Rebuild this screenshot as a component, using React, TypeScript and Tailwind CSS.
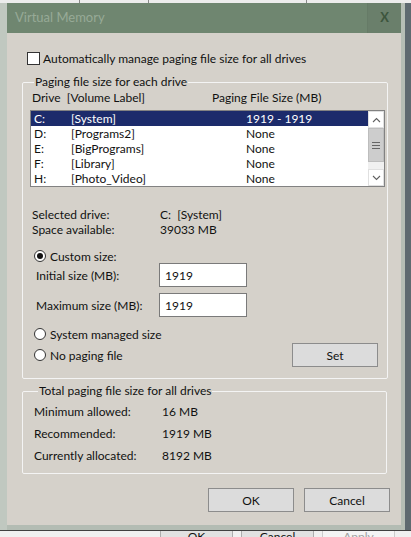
import React from 'react';

const font = "font-['Lato','Liberation_Sans',sans-serif]";

const Radio = ({ checked, label }: { checked?: boolean; label: string }) => (
  <div className="flex items-center h-[14px]">
    <div className="w-[12px] h-[12px] rounded-full border border-[#333] bg-white flex items-center justify-center">
      {checked && <div className="w-[6px] h-[6px] rounded-full bg-[#111]" />}
    </div>
    <span className="ml-[4px]">{label}</span>
  </div>
);

const Button = ({ label, className = '' }: { label: string; className?: string }) => (
  <div className={`w-[86px] h-[24px] bg-[#dcdcdc] border border-[#8c8c8c] flex items-center justify-center ${className}`}>
    {label}
  </div>
);

const drives = [
  { d: 'C:', label: '[System]', size: '1919 - 1919', selected: true },
  { d: 'D:', label: '[Programs2]', size: 'None' },
  { d: 'E:', label: '[BigPrograms]', size: 'None' },
  { d: 'F:', label: '[Library]', size: 'None' },
  { d: 'H:', label: '[Photo_Video]', size: 'None' },
];

const Chevron = ({ up }: { up?: boolean }) => (
  <svg width="9" height="6" viewBox="0 0 9 6">
    <path d={up ? 'M1 5 L4.5 1.5 L8 5' : 'M1 1 L4.5 4.5 L8 1'} fill="none" stroke="#606060" strokeWidth="1.1" />
  </svg>
);

export default function App() {
  return (
    <div className={`w-[411px] h-[537px] overflow-hidden bg-[#bcc5bc] flex flex-col text-[12px] text-[#111] ${font}`}>
      {/* background window tabs, mostly hidden behind the dialog */}
      <div className="h-[3px] overflow-hidden bg-[#ececec] flex text-[12px] leading-[14px] text-[#222] shrink-0">
        <div className="-mt-[11px] flex">
          <span className="pl-[2px] pr-[6px] border-r border-[#888]">Visual Effects</span>
          <span className="px-[8px] border-r border-[#888]">Advanced</span>
          <span className="px-[8px] border-r border-[#888]">Data Execution Prevention</span>
        </div>
      </div>

      <div className="flex flex-1">
        <div className="w-[7px] bg-[#c0c8c0]" />
        <div className="w-[394px] flex flex-col">
          {/* title bar */}
          <div className="h-[30px] bg-[#6f8670] flex">
            <div className="flex-1 pl-[8px] flex items-center text-[13px] text-[#97aa97]">Virtual Memory</div>
            <div className="w-[34px] bg-[#6a7f6b] border-l border-[#667b67] flex items-center justify-center text-[13px] font-bold text-[#3d553d]">
              X
            </div>
          </div>

          {/* body */}
          <div className="h-[492px] bg-[#d5d1ca] pt-[18px] px-[15px] flex flex-col leading-[15px]">
            <div className="flex items-center h-[15px] pl-[5px]">
              <div className="w-[13px] h-[13px] bg-white border border-[#333]" />
              <span className="ml-[3px]">Automatically manage paging file size for all drives</span>
            </div>

            <fieldset className="mt-[9px] w-[365px] border border-[#f4f4f4] rounded-[2px] pl-[7px] pr-[2px] pb-[11px]">
              <legend className="ml-[4px] px-[1px] leading-[14px]">Paging file size for each drive</legend>
              <div className="flex h-[15px] mt-[1px] pl-[2px]">
                <span className="w-[180px]">Drive&nbsp;&nbsp;[Volume Label]</span>
                <span>Paging File Size (MB)</span>
              </div>
              <div className="mt-[5px] w-[355px] h-[77px] bg-white border border-[#828282] flex">
                <div className="flex-1 flex flex-col">
                  {drives.map((r) => (
                    <div
                      key={r.d}
                      className={`h-[15px] flex items-center ${r.selected ? 'bg-[#1c2b6b] text-white' : ''}`}
                    >
                      <span className="w-[40px] pl-[3px]">{r.d}</span>
                      <span className="w-[175px]">{r.label}</span>
                      <span>{r.size}</span>
                    </div>
                  ))}
                </div>
                <div className="w-[16px] bg-[#f0f0f0] flex flex-col">
                  <div className="h-[17px] bg-white border border-[#e0e0e0] flex items-center justify-center">
                    <Chevron up />
                  </div>
                  <div className="h-[34px] bg-[#cdcdcd] border border-[#bdbdbd] flex flex-col items-center justify-center gap-[2px]">
                    <div className="w-[8px] h-[1px] bg-[#666]" />
                    <div className="w-[8px] h-[1px] bg-[#666]" />
                    <div className="w-[8px] h-[1px] bg-[#666]" />
                  </div>
                  <div className="flex-1" />
                  <div className="h-[17px] bg-white border border-[#e0e0e0] flex items-center justify-center">
                    <Chevron />
                  </div>
                </div>
              </div>

              <div className="mt-[20px] pl-[2px]">
                <div className="flex h-[15px]">
                  <span className="w-[128px]">Selected drive:</span>
                  <span>C:&nbsp;&nbsp;[System]</span>
                </div>
                <div className="flex h-[15px]">
                  <span className="w-[128px]">Space available:</span>
                  <span>39033 MB</span>
                </div>
              </div>

              <div className="mt-[12px] pl-[4px]">
                <Radio checked label="Custom size:" />
              </div>
              <div className="flex items-center pl-[6px]">
                <span className="w-[123px]">Initial size (MB):</span>
                <div className="w-[88px] h-[24px] bg-white border border-[#7a7a7a] flex items-center pl-[5px]">1919</div>
              </div>
              <div className="flex items-center pl-[6px] mt-[6px]">
                <span className="w-[123px]">Maximum size (MB):</span>
                <div className="w-[88px] h-[24px] bg-white border border-[#7a7a7a] flex items-center pl-[5px]">1919</div>
              </div>

              <div className="flex mt-[10px] pl-[4px] pr-[7px]">
                <div className="flex-1 flex flex-col gap-[7px]">
                  <Radio label="System managed size" />
                  <Radio label="No paging file" />
                </div>
                <Button label="Set" className="mt-[16px] w-[86px]" />
              </div>
            </fieldset>

            <fieldset className="mt-[5px] w-[365px] border border-[#f4f4f4] rounded-[2px] pl-[11px] pb-[10px]">
              <legend className="ml-[4px] px-[1px] leading-[14px]">Total paging file size for all drives</legend>
              <div className="flex flex-col gap-[7px] mt-[6px]">
                <div className="flex h-[15px]">
                  <span className="w-[128px]">Minimum allowed:</span>
                  <span>16 MB</span>
                </div>
                <div className="flex h-[15px]">
                  <span className="w-[128px]">Recommended:</span>
                  <span>1919 MB</span>
                </div>
                <div className="flex h-[15px]">
                  <span className="w-[128px]">Currently allocated:</span>
                  <span>8192 MB</span>
                </div>
              </div>
            </fieldset>

            <div className="flex justify-end gap-[10px] mt-[14px] -mr-[4px]">
              <Button label="OK" />
              <Button label="Cancel" />
            </div>
          </div>
          <div className="h-[5px] bg-[#b3bcb3]" />
        </div>
        <div className="w-[4px] bg-[#b5beb5]" />
        <div className="flex-1 bg-[#5e6a70]" />
      </div>

      {/* background window buttons peeking out below */}
      <div className="h-[1px] bg-[#404040] shrink-0" />
      <div className="h-[6px] bg-[#f0f0f0] shrink-0 flex overflow-hidden text-[12px] leading-[14px]">
        <div className="w-[160px]" />
        <div className="w-[73px] h-[14px] bg-[#e1e1e1] border border-[#adadad] flex justify-center -mt-[2px]">
          <span>OK</span>
        </div>
        <div className="w-[8px]" />
        <div className="w-[73px] h-[14px] bg-[#e1e1e1] border border-[#adadad] flex justify-center -mt-[2px]">
          <span>Cancel</span>
        </div>
        <div className="w-[8px]" />
        <div className="w-[73px] h-[14px] bg-[#f4f4f4] border border-[#cccccc] flex justify-center -mt-[2px] text-[#a0a0a0]">
          <span>Apply</span>
        </div>
      </div>
    </div>
  );
}
